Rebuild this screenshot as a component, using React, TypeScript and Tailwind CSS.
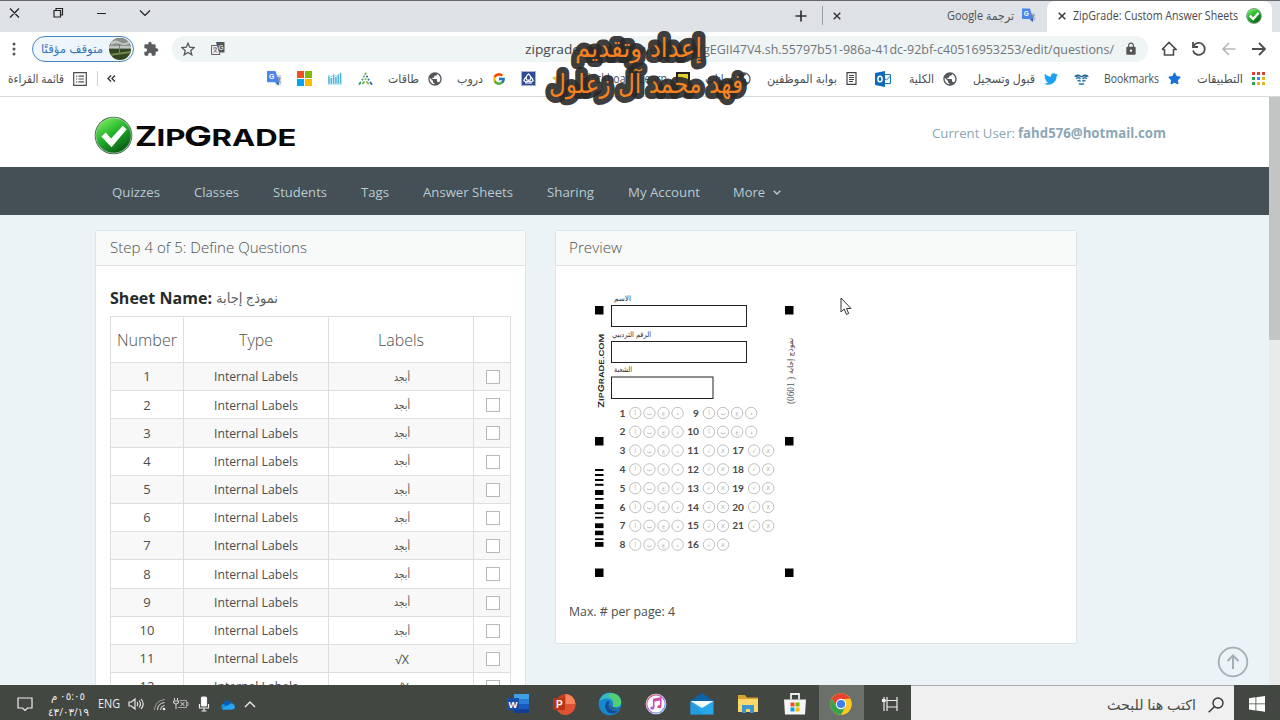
import { useLayoutEffect, useRef, type ReactNode } from 'react';
import { MdExtension, MdLock, MdPublic } from 'react-icons/md';
import { FaTwitter, FaStar } from 'react-icons/fa';
import { FcGoogle } from 'react-icons/fc';

/** One line of text scaled horizontally so that it fills its box exactly. */
function Fit({ className, children }: { className: string; children: ReactNode }) {
  const outer = useRef<HTMLSpanElement>(null);
  const inner = useRef<HTMLSpanElement>(null);
  useLayoutEffect(() => {
    const o = outer.current;
    const i = inner.current;
    if (!o || !i) return;
    i.style.transform = 'none';
    const natural = i.getBoundingClientRect().width;
    i.style.transform = `scaleX(${o.getBoundingClientRect().width / natural})`;
  });
  return (
    <span ref={outer} className={`block shrink-0 whitespace-nowrap ${className}`}>
      <span ref={inner} dir="auto" className="inline-block origin-left">
        {children}
      </span>
    </span>
  );
}

function CheckBall({ className, id }: { className: string; id: string }) {
  return (
    <svg viewBox="0 0 40 40" className={className}>
      <defs>
        <linearGradient id={id} x1="0.2" y1="0" x2="0.8" y2="1">
          <stop offset="0" stopColor="#7bea5c" />
          <stop offset="0.45" stopColor="#1fb22a" />
          <stop offset="1" stopColor="#07500f" />
        </linearGradient>
      </defs>
      <circle cx="20" cy="20" r="19.3" fill="#3f6b48" />
      <circle cx="20" cy="20" r="18.4" fill="#c4dcc4" />
      <circle cx="20" cy="20" r="17.8" fill={`url(#${id})`} />
      <path d="M7.5 21 12 17l5.5 6L29.5 10l4 3.5L18 32z" fill="#fff" />
    </svg>
  );
}

function Translate({ className }: { className: string }) {
  return (
    <svg viewBox="0 0 16 16" className={className}>
      <path d="M6 4h9.2v11.5H9z" fill="#d5dbe0" />
      <path d="M0 0h9l4 12H1.2Q0 12 0 11z" fill="#4a86e8" />
      <path d="m9 12 3 3.5L13 12z" fill="#2858b8" />
      <text x="2" y="8.8" fontSize="7.5" fontWeight="700" fontFamily="Liberation Sans" fill="#fff">G</text>
      <path d="M10.5 7.5h4M12.5 6.5v1M14 7.5q-.5 3-3 4.5M11.5 8.5l3 4" stroke="#6b7d91" strokeWidth=".9" fill="none" />
    </svg>
  );
}

function Ms({ className }: { className: string }) {
  return (
    <svg viewBox="0 0 15 15" className={className}>
      <path d="M0 0h7v7H0z" fill="#f25022" />
      <path d="M8 0h7v7H8z" fill="#7fba00" />
      <path d="M0 8h7v7H0z" fill="#00a4ef" />
      <path d="M8 8h7v7H8z" fill="#ffb900" />
    </svg>
  );
}

function TabStrip() {
  return (
    <div className="flex h-[32px] shrink-0 items-start border-t border-[#67676d] bg-[#dee1e5]">
      <svg viewBox="0 0 160 26" className="h-[26px] w-[160px]" fill="none" stroke="#222" strokeWidth="1.2">
        <path d="m10 7.500 9 9m0-9-9 9M97 12.500h9m34-3 5 5 5-5" />
        <path d="M54 9.500h6.500V16H54zm2-.5V7.500h6.500V14H61" />
      </svg>
      <div className="ml-[635px] flex h-[29px] items-center">
        <svg viewBox="0 0 12 12" className="size-[12px]" stroke="#333" strokeWidth="1.700"><path d="M6 .5v11M.5 6h11" /></svg>
        <div className="ml-[15px] h-[19px] w-px bg-[#9a9ea3]" />
        <svg viewBox="0 0 8 8" className="ml-[10px] size-[8px]" stroke="#333" strokeWidth="1.400"><path d="m.7.7 6.600 6.600m0-6.600L.7 7.300" /></svg>
        <Fit className="ml-[106px] w-[67px] text-[12px] leading-[18px] text-[#505357]">ترجمة Google</Fit>
        <Translate className="ml-[8px] h-[15px] w-[14px]" />
      </div>
      <div className="ml-[11px] flex h-[31px] w-[225px] items-center rounded-t-lg bg-white pb-[2px]">
        <svg viewBox="0 0 8 8" className="ml-[11px] size-[8px]" stroke="#333" strokeWidth="1.400"><path d="m.7.7 6.600 6.600m0-6.600L.7 7.300" /></svg>
        <Fit className="ml-[7px] w-[165px] text-[12px] leading-[18px] text-[#45494d]">ZipGrade: Custom Answer Sheets</Fit>
        <CheckBall id="tabBall" className="ml-[8px] size-[16px]" />
      </div>
    </div>
  );
}

function Toolbar() {
  return (
    <div className="flex h-[33px] shrink-0 items-center bg-white">
      <svg viewBox="0 0 4 14" className="ml-[12px] h-[14px] w-[4px]" fill="#555">
        <circle cx="2" cy="2" r="1.500" /><circle cx="2" cy="7" r="1.500" /><circle cx="2" cy="12" r="1.500" />
      </svg>
      <div className="ml-[16px] flex h-[26px] w-[102px] items-center rounded-full border border-[#4d86b8] bg-[#eef6fc]">
        <Fit className="ml-[8px] w-[62px] text-[12px] leading-[18px] text-[#3a78b5]">متوقف مؤقتًا</Fit>
        <svg viewBox="0 0 22 22" className="ml-[6px] size-[22px] rounded-full">
          <path d="M0 0h22v22H0z" fill="#33461f" />
          <path d="M0 0h22v11H0z" fill="#8b918d" />
          <path d="M2 4q5-3 9 0t9-1v3q-5 2-9 0t-9 1zM0 8h22v2H0z" fill="#c3c7c2" />
          <path d="M10 6h1v10h-1zM0 16l22-3v2L0 18z" fill="#738851" />
        </svg>
      </div>
      <MdExtension className="ml-[9px] size-[16px] text-[#5a5d60]" />
      <div className="ml-[13px] flex h-[26px] w-[976px] items-center rounded-full bg-[#eff4f4]">
        <svg viewBox="0 0 24 24" className="ml-[9px] size-[14px]" fill="none" stroke="#555" strokeWidth="2.200">
          <path d="m12 2 3 7 7.500.7-5.700 5 1.700 7.300L12 18l-6.500 4 1.700-7.300-5.700-5L9 9z" />
        </svg>
        <svg viewBox="0 0 14 14" className="ml-[16px] size-[14px]">
          <path d="M5 0h8.500v10.500H7.500z" fill="#53575a" />
          <path d="M.5 3.500h6l2.500 9H.5z" fill="#eee" stroke="#666" />
          <path d="M2 6h4M4 5v1m1.500 0q0 3-3 4.500M3 7.500l3 3" stroke="#666" strokeWidth=".8" fill="none" />
          <text x="7.500" y="7.500" fontSize="6.500" fontWeight="700" fontFamily="Liberation Sans" fill="#ddd">G</text>
        </svg>
        <div className="ml-[300px] flex items-center text-[13.5px] leading-[20px]">
          <Fit className="w-[178px] text-[#45494c]">zipgrade.com/answersheet/</Fit>
          <Fit className="w-[411px] text-[#6f7679]">gEGII47V4.sh.55797b51-986a-41dc-92bf-c40516953253/edit/questions/</Fit>
        </div>
        <MdLock className="ml-[10px] size-[14px] text-[#555]" />
      </div>
      <svg viewBox="0 0 16 16" className="ml-[13px] size-[16px]" fill="none" stroke="#4b4e51" strokeWidth="1.600">
        <path d="M3.500 8v6h9V8M1 8.500 8 1.500l7 7h-2.500M1 8.500h2.500" />
      </svg>
      <svg viewBox="0 0 16 16" className="ml-[14px] size-[16px]" fill="none" stroke="#4b4e51" strokeWidth="1.800">
        <path d="M2.500 5A6 6 0 1 1 2 9.500" /><path d="M2 1v5h5" />
      </svg>
      <svg viewBox="0 0 14 14" className="ml-[15px] size-[14px]" fill="none" stroke="#b5b8ba" strokeWidth="1.600">
        <path d="M13.500 7h-12M7 1 1 7l6 6" />
      </svg>
      <svg viewBox="0 0 14 14" className="ml-[16px] size-[14px]" fill="none" stroke="#4b4e51" strokeWidth="1.800">
        <path d="M0 7h12.500M7 1l6 6-6 6" />
      </svg>
    </div>
  );
}

const globe = 'size-[16px] shrink-0 text-[#55585b]';

function Bookmarks() {
  return (
    <div className="flex h-[32px] shrink-0 items-center border-b border-[#d7dada] bg-white pb-[4px] text-[12px] leading-[18px] text-[#4c5053]">
      <Fit className="ml-[8px] w-[56px]">قائمة القراءة</Fit>
      <svg viewBox="0 0 14 14" className="ml-[9px] size-[14px]" fill="none" stroke="#4b4e51" strokeWidth="1.200">
        <path d="M.7.7h12.600v12.600H.7zM3 4.200h1.200m1.300 0H11M3 7h1.200m1.300 0H11M3 9.800h1.200m1.300 0H11" />
      </svg>
      <div className="ml-[10px] h-[15px] w-px bg-[#d0d3d5]" />
      <svg viewBox="0 0 10 8" className="ml-[9px] h-[7px] w-[9px]" fill="none" stroke="#333" strokeWidth="1.500"><path d="M4.500.5 1 4l3.500 3.500M9 .5 5.500 4 9 7.500" /></svg>
      <Translate className="ml-[151px] size-[15px]" />
      <Ms className="ml-[15px] size-[15px]" />
      <svg viewBox="0 0 15 13" className="ml-[16px] h-[13px] w-[14px]">
        <path d="M1 12V4m2.500 8V6m2.500 6V3m2.500 9V5m2.500 7V2.500M13.500 12V1" stroke="#4db4d8" strokeWidth="1.700" />
        <path d="m0 3 3 2 3-3 3 2 5-4M0 12.500h15" stroke="#93d3e8" fill="none" />
      </svg>
      <svg viewBox="0 0 15 14" className="ml-[16px] h-[14px] w-[15px]" strokeLinecap="round" strokeWidth="2" fill="none">
        <path d="M7.500 1.500v.5M6 4.500l-.1.100" stroke="#63b246" />
        <path d="m9 4.500.1.100M10.500 7.500l.1.100M12.500 10.500l1 1.500" stroke="#2a6eb5" />
        <path d="m4.500 7.500-.1.100M2.500 10.500l-1 1.500" stroke="#2d9c8d" />
        <path d="m7.500 7-.1.100M6 10l-1 1.500M9 10l1 1.500" stroke="#7ebc3b" />
      </svg>
      <Fit className="ml-[15px] w-[31px]">طاقات</Fit>
      <MdPublic className={`ml-[8px] ${globe}`} />
      <Fit className="ml-[14px] w-[26px]">دروب</Fit>
      <FcGoogle className="ml-[9px] size-[14px] shrink-0" />
      <svg viewBox="0 0 15 15" className="ml-[15px] size-[15px]">
        <path d="M0 0h15v15H0z" fill="#a8b4d5" /><path d="M1 1h13v13H1z" fill="#304b91" />
        <path d="M7.500 3q3 2 2 6h-4q-1-4 2-6zM2.500 9q1.500 3 5 1 3.500 2 5-1M4 12h7M5 6q-2 2-2 4m7-4q2 2 2 4" stroke="#fff" strokeWidth="1.100" fill="none" />
      </svg>
      <FaStar className="ml-[16px] size-[14px] shrink-0 text-[#e1c633]" />
      <Fit className="ml-[15px] w-[86px]">Blackboard Learn</Fit>
      <div className="ml-[9px] size-[14px] shrink-0 border-2 border-[#222] bg-[#e5ce28]" />
      <Fit className="ml-[15px] w-[25px]">بيانات</Fit>
      <MdPublic className={`ml-[6px] ${globe}`} />
      <Fit className="ml-[15px] w-[70px]">بوابة الموظفين</Fit>
      <svg viewBox="0 0 11 13" className="ml-[9px] h-[13px] w-[11px]" fill="none" stroke="#444" strokeWidth="1.200"><path d="M1 .7h9v11.600H1zM3 3.500h5M3 5.500h5M3 7.500h5M3 9.500h4" /></svg>
      <svg viewBox="0 0 16 16" className="ml-[18px] size-[16px]">
        <path d="M8 3.500h7.500v9H8z" fill="#fff" stroke="#1473bf" /><path d="m8 6 3.500 3L15.500 5" stroke="#1473bf" fill="none" />
        <path d="m0 2 10-2v16L0 14z" fill="#0f6bb8" /><ellipse cx="5" cy="8" rx="2.100" ry="2.800" fill="none" stroke="#fff" strokeWidth="1.500" />
      </svg>
      <Fit className="ml-[18px] w-[25px]">الكلية</Fit>
      <MdPublic className={`ml-[8px] ${globe}`} />
      <Fit className="ml-[15px] w-[62px]">قبول وتسجيل</Fit>
      <FaTwitter className="ml-[9px] size-[14px] shrink-0 text-[#1da1f2]" />
      <svg viewBox="0 0 15 12" className="ml-[16px] h-[12px] w-[15px]" fill="none">
        <path d="M0 3.500Q3 0 7.500 3 12 0 15 3.500l-2.500.500Q9.500 3 7.500 4.500 5.500 3 2.500 4z" fill="#245f8f" />
        <path d="M2 5.500q3-1.500 4.500.5M13 5.500q-3-1.500-4.500.5M3.500 8q2-1 3 .5m5-.5q-2-1-3 .5M5 10.500q2.500 1.500 5 0" stroke="#2d7eb0" strokeWidth="1.500" />
      </svg>
      <Fit className="ml-[15px] w-[55px]">Bookmarks</Fit>
      <FaStar className="ml-[9px] size-[13px] shrink-0 text-[#1a73d8]" />
      <Fit className="ml-[16px] w-[46px]">التطبيقات</Fit>
      <div className="ml-[9px] grid grid-cols-3 gap-[2px]">
        {['bg-[#d94435]', 'bg-[#d94435]', 'bg-[#d94435]', 'bg-[#2d9d50]', 'bg-[#4285f4]', 'bg-[#e8b323]', 'bg-[#2d9d50]', 'bg-[#e8b323]', 'bg-[#e8b323]'].map((c, i) => (
          <div key={i} className={`size-[3px] ${c}`} />
        ))}
      </div>
    </div>
  );
}

function Logo() {
  return (
    <div className="ml-[94px] flex items-center">
      <CheckBall id="logoBall" className="size-[39px]" />
      <svg viewBox="133 115 164 40" className="h-[40px] w-[164px]" fontFamily="Inter" fontWeight="700" fill="#080808">
        <text x="135" y="145.500" fontSize="27" textLength="22" lengthAdjust="spacingAndGlyphs">Z</text>
        <text x="156.500" y="145.500" fontSize="22.500" textLength="29" lengthAdjust="spacingAndGlyphs">IP</text>
        <text x="184" y="145.500" fontSize="27" textLength="28" lengthAdjust="spacingAndGlyphs">G</text>
        <text x="211.500" y="145.500" fontSize="22.500" textLength="85" lengthAdjust="spacingAndGlyphs">RADE</text>
      </svg>
    </div>
  );
}

function SiteNav() {
  return (
    <nav className="flex h-[48px] shrink-0 items-center gap-[34px] bg-[#444f56] pt-[2px] pl-[112px] text-[13.5px] leading-[20px] text-[#b9cbd3]">
      <Fit className="w-[48px]">Quizzes</Fit>
      <Fit className="w-[45px]">Classes</Fit>
      <Fit className="w-[54px]">Students</Fit>
      <Fit className="w-[28px]">Tags</Fit>
      <Fit className="w-[90px]">Answer Sheets</Fit>
      <Fit className="w-[47px]">Sharing</Fit>
      <Fit className="w-[72px]">My Account</Fit>
      <div className="-ml-px flex items-center gap-[8px]">
        <Fit className="w-[32px]">More</Fit>
        <svg viewBox="0 0 8 5" className="h-[5px] w-[8px]" fill="none" stroke="#b9cbd3" strokeWidth="1.300"><path d="m.7.7 3.300 3.300L7.300.7" /></svg>
      </div>
    </nav>
  );
}

const grid = 'grid grid-cols-[73px_145px_145px_36px] divide-x divide-[#dddfdf]';

function QuestionsCard() {
  return (
    <section className="h-[520px] w-[431px] shrink-0 rounded-[3px] border border-[#dfe5e7] bg-white">
      <header className="flex h-[35px] items-center border-b border-[#dfe2e3] bg-[#f8f9f9] pb-[2px] pl-[14px] text-[15px] font-light text-[#4d524f]">
        <Fit className="w-[197px]">Step 4 of 5: Define Questions</Fit>
      </header>
      <div className="px-[14px]">
        <div className="flex h-[50px] items-end pb-[6px]">
          <Fit className="w-[102px] text-[15.5px] leading-[24px] font-bold text-[#262a28]">Sheet Name:</Fit>
          <Fit className="ml-[4px] w-[62px] text-[14px] leading-[24px] text-[#5c615e]">نموذج إجابة</Fit>
        </div>
        <div className="w-[401px] border border-[#dddfdf]">
          <div className={`${grid} h-[45px] items-stretch text-[16px] font-light text-[#4d524f]`}>
            <div className="flex items-center justify-center"><Fit className="w-[60px]">Number</Fit></div>
            <div className="flex items-center justify-center"><Fit className="w-[34px]">Type</Fit></div>
            <div className="flex items-center justify-center"><Fit className="w-[46px]">Labels</Fit></div>
            <div />
          </div>
          {Array.from({ length: 14 }, (_, i) => i + 1).map((n) => (
            <div key={n} className={`${grid} h-[28.2px] border-t border-[#dddfdf] text-[13px] text-[#4a4f4c] ${n % 2 ? 'bg-[#f8f8f8]' : 'bg-white'}`}>
              <div className="flex items-center justify-center pt-px">{n}</div>
              <div className="flex items-center justify-center pt-px"><Fit className="w-[84px]">Internal Labels</Fit></div>
              <div className="flex items-center justify-center pt-px pl-px">
                {n <= 10 ? <Fit className="w-[16px] text-[11px]">أبجد</Fit> : <Fit className="w-[14px] pt-[2px] text-[12px]">√X</Fit>}
              </div>
              <div className="flex items-center justify-center pt-px pl-px"><div className="size-[14px] border border-[#b5b9b8] bg-white" /></div>
            </div>
          ))}
        </div>
      </div>
    </section>
  );
}

const BARS: [number, number][] = [
  [469, 2], [474, 2], [479, 2], [483.8, 2], [490, 5], [498, 1.8], [504, 5], [512.3, 1.8],
  [516.8, 1.8], [523.3, 4.8], [530.7, 4.5], [538.3, 1.8], [542, 4.8],
];
const FOUR = ['أ', 'ب', 'ج', 'د'];
const TWO = ['√', 'X'];

function Question({ n, right, first, y, marks }: { n: number; right: number; first: number; y: number; marks: string[] }) {
  return (
    <g>
      <text x={right} y={y + 3.5} textAnchor="end" fontSize="10.2" fontFamily="Lato" fontWeight="700" fill="#484848">{n}</text>
      {marks.map((m, i) => (
        <g key={m}>
          <circle cx={first + i * 14.1} cy={y} r="5.7" fill="none" stroke="#b0b0b0" strokeWidth=".8" />
          <text x={first + i * 14.1} y={y + 2} textAnchor="middle" fontSize="5.5" fontFamily="DejaVu Sans" fill="#aaa">{m}</text>
        </g>
      ))}
    </g>
  );
}

function SheetPreview() {
  const rowY = (r: number) => 413 + r * 18.8;
  return (
    <svg viewBox="580 280 220 310" className="ml-[10px] h-[310px] w-[220px]">
      {[306, 437, 568.5].map((y) => (
        <g key={y}><rect x="595" y={y} width="8.500" height="8.500" /><rect x="785" y={y} width="8.500" height="8.500" /></g>
      ))}
      {BARS.map(([y, h]) => <rect key={y} x="595" y={y} width="8.500" height={h} />)}
      <g fill="none" stroke="#222" strokeWidth="1">
        <rect x="611.500" y="305.500" width="135" height="21" />
        <rect x="611.500" y="341.500" width="135" height="21" />
        <rect x="611.500" y="377" width="101.500" height="21.500" />
      </g>
      <g fontFamily="DejaVu Sans" fontSize="7.500" fill="#333">
        <text x="614" y="301" textLength="17" lengthAdjust="spacingAndGlyphs">الاسم</text>
        <text x="612" y="336.500" textLength="39" lengthAdjust="spacingAndGlyphs">الرقم الترديبي</text>
        <text x="614" y="372" textLength="18" lengthAdjust="spacingAndGlyphs">الشعبة</text>
      </g>
      <text transform="translate(603.500 408) rotate(-90)" fontFamily="Inter" fontWeight="600" fontSize="8" fill="#222" textLength="74" lengthAdjust="spacingAndGlyphs">
        Z<tspan fontSize="6.800">IP</tspan>G<tspan fontSize="6.800">RADE.COM</tspan>
      </text>
      <text transform="translate(793 374) rotate(-90)" fontFamily="DejaVu Sans" fontSize="8" fill="#444" textLength="36" lengthAdjust="spacingAndGlyphs">نموذج إجابة</text>
      <text transform="translate(794 404) rotate(-90)" fontFamily="Liberation Serif" fontSize="10" fill="#555" textLength="27" lengthAdjust="spacingAndGlyphs">(0601 )</text>
      {[1, 2, 3, 4, 5, 6, 7, 8].map((n) => <Question key={n} n={n} right={625.5} first={635.3} y={rowY(n - 1)} marks={FOUR} />)}
      {[9, 10, 11, 12, 13, 14, 15, 16].map((n) => <Question key={n} n={n} right={699} first={708.9} y={rowY(n - 9)} marks={n < 11 ? FOUR : TWO} />)}
      {[17, 18, 19, 20, 21].map((n) => <Question key={n} n={n} right={744} first={754.1} y={rowY(n - 15)} marks={TWO} />)}
    </svg>
  );
}

function PreviewCard() {
  return (
    <section className="h-[414px] w-[522px] shrink-0 rounded-[3px] border border-[#dfe5e7] bg-white">
      <header className="flex h-[35px] items-center border-b border-[#dfe2e3] bg-[#f8f9f9] pb-[2px] pl-[13px] text-[15px] font-light text-[#4d524f]">
        <Fit className="w-[53px]">Preview</Fit>
      </header>
      <div className="px-[14px] pt-[14px]">
        <SheetPreview />
        <div className="-ml-px pt-[11px] text-[13px] leading-[20px] text-[#4a4f4c]">
          <Fit className="w-[106px]">Max. # per page: 4</Fit>
        </div>
      </div>
    </section>
  );
}

function WindowsTaskbar() {
  const icon = 'h-[24px] w-[24px] shrink-0';
  return (
    <div className="flex h-[35px] shrink-0 items-stretch bg-[#434742] text-[#eee]">
      <div className="flex w-[505.5px] items-center pt-[3px]">
        <svg viewBox="0 0 16 16" className="ml-[17px] size-[16px]" fill="none" stroke="#eee" strokeWidth="1.200"><path d="M1 2h14v10h-4.500L8 14.500 5.500 12H1z" /></svg>
        <div className="ml-[14px] flex w-[42px] flex-col items-center text-[11px] leading-[16px]">
          <Fit className="w-[34px]">٠٥:٠٥ م</Fit>
          <Fit className="w-[41px]">٤٣/٠٣/١٩</Fit>
        </div>
        <Fit className="ml-[9px] w-[22px] text-[12px]">ENG</Fit>
        <svg viewBox="0 0 16 14" className="ml-[8px] h-[14px] w-[16px]" fill="none" stroke="#eee" strokeWidth="1.100"><path d="M1 5h2.500L7 2v10L3.500 9H1zM9 5q1.500 2 0 4M11 3.500q3 3.500 0 7M13 2q4.500 5 0 10" /></svg>
        <svg viewBox="0 0 14 14" className="ml-[9px] size-[14px]" fill="none"><circle cx="11" cy="12" r="1.300" fill="#eee" /><path d="M7.500 13q0-4 4-4.500M4.500 13q0-6.500 7-7.500" stroke="#ddd" /><path d="M1.500 13Q2 3.500 12 2.500" stroke="#9a9d98" /></svg>
        <svg viewBox="0 0 16 12" className="ml-[6px] h-[12px] w-[16px]" fill="none" stroke="#ddd"><path d="M1.500 0v2.500m3-2.500v2.500M.5 3h5v2q-2.500 2-5 0zM3 6v5" /><path d="M6.500 2.500h7v7H5M13.500 4.500H15v3h-1.500" stroke="#aaa" /><path d="m7.500 4 4 4m0-4-4 4" /></svg>
        <svg viewBox="0 0 12 16" className="ml-[9px] h-[16px] w-[12px]" fill="none" stroke="#eee" strokeWidth="1.200"><rect x="3.500" y="1" width="5" height="9" rx="1" fill="#fff" /><path d="M1.500 8v4h9V8M6 12v3M3.500 15h5" /></svg>
        <svg viewBox="0 0 16 11" className="ml-[9px] h-[11px] w-[16px]"><path d="M4 10.500a3.500 3.500 0 0 1 0-6A5 5 0 0 1 12.500 4q3 .5 3.300 3.500 0 3-3.300 3z" fill="#1490df" /><path d="M3.500 4.500A5 5 0 0 1 12.500 4L8 7z" fill="#0a5ba8" /><path d="m3 10 9-5.500q3.500.5 3.800 3.500-.3 2.500-3.300 2.500H4z" fill="#2aa5ef" /></svg>
        <svg viewBox="0 0 12 7" className="ml-[9px] h-[7px] w-[12px]" fill="none" stroke="#eee" strokeWidth="1.400"><path d="m1 6 5-5 5 5" /></svg>
      </div>
      <div className="flex flex-1 items-center gap-[22.200px] pt-[3px]">
        <svg viewBox="0 0 24 24" className={icon}><path d="M8 2h15v5H8z" fill="#3fa0e8" /><path d="M8 7h15v5H8z" fill="#2b7cd3" /><path d="M8 12h15v5H8z" fill="#185abd" /><path d="M8 17h15v4H8z" fill="#103f91" /><path d="M1 6h12v12H1z" fill="#174ea6" /><text x="2.500" y="15.500" fontFamily="Liberation Sans" fontWeight="700" fontSize="9.500" fill="#fff">W</text></svg>
        <svg viewBox="0 0 24 24" className={icon}><circle cx="13.500" cy="12" r="10" fill="#c9401f" /><path d="M13.500 2a10 10 0 0 1 10 10h-10z" fill="#f6855f" /><path d="M23.500 12a10 10 0 0 1-20 2L13.500 12z" fill="#df5131" /><path d="M1 6h12v12H1z" fill="#b83417" /><text x="4" y="15.500" fontFamily="Liberation Sans" fontWeight="700" fontSize="10" fill="#fff">P</text></svg>
        <svg viewBox="0 0 24 24" className={icon}>
          <circle cx="12" cy="12" r="11.300" fill="#1688cf" />
          <path d="M1 9Q4 .5 12.500.7 23 1.500 23.300 10.500q-1 4.500-6 4.500-3.500-.3-2-3Q14 6 8 6.500 3.500 7 1 9z" fill="#35b8c8" />
          <path d="M14 1q8 1.500 9.300 9.500-1 4.500-6 4.500-3.500-.3-2-3 1-6-5.500-8z" fill="#54cf70" />
          <path d="M9 9q-4 6 .5 11 6 4 11.500-2-5 2-9-1.500-3-4 0-7.500z" fill="#164c94" />
          <path d="M12.500 10.500q-1.500 4.500 4 6 4 .5 6-1l.5 1q-5 1.500-8.500.5-4-2-2-6.500z" fill="#434742" />
        </svg>
        <svg viewBox="0 0 24 24" className={icon}>
          <defs><linearGradient id="noteRing" x1="0" y1="0" x2="1" y2="1"><stop offset="0" stopColor="#f4516c" /><stop offset=".5" stopColor="#b96be0" /><stop offset="1" stopColor="#43b5ee" /></linearGradient></defs>
          <circle cx="12" cy="12" r="10.300" fill="#fff" /><circle cx="12" cy="12" r="9.200" fill="none" stroke="url(#noteRing)" strokeWidth="1.200" />
          <path d="M9.700 15.500V7.500l7-1.500v8M9.700 9l7-1.500" stroke="#cf4da8" strokeWidth="1.600" fill="none" /><ellipse cx="8.300" cy="16" rx="2" ry="1.600" fill="#a35ae0" /><ellipse cx="15.300" cy="14.700" rx="2" ry="1.600" fill="#e2467d" />
        </svg>
        <svg viewBox="0 0 24 24" className={icon}><path d="M.5 9 12 1l11.500 8z" fill="#0c63a8" /><path d="M.5 9h23v13.500H.5z" fill="#28a8ea" /><path d="M.5 9h23L12 16z" fill="#f3f8fb" /><path d="M.5 9 14 22.500H.5z" fill="#1e8fd5" opacity=".55" /></svg>
        <svg viewBox="0 0 24 24" className={icon}><path d="M2 3h7l2 2.500h11V9H2z" fill="#d9a22b" /><path d="M2 7h20v13H2z" fill="#fbd86b" /><path d="M6 13h12v8h-4v-4h-4v4H6z" fill="#3d97cf" /></svg>
        <svg viewBox="0 0 24 24" className={icon}><path d="M8 7.500V2h8v5.500" stroke="#eee" strokeWidth="1.800" fill="none" /><path d="M1 7.500h22l-1 15H2z" fill="#f5f5f5" /><path d="M7.500 10.500h4v4h-4z" fill="#f25022" /><path d="M12.500 10.500h4v4h-4z" fill="#7fba00" /><path d="M7.500 15.500h4v4h-4z" fill="#00a4ef" /><path d="M12.500 15.500h4v4h-4z" fill="#ffb900" /></svg>
        <div className="-mx-[10px] -mt-[3px] flex h-[35px] w-[45px] shrink-0 items-center justify-center bg-[#6c706b] pt-[3px]">
          <svg viewBox="0 0 24 24" className="size-[24px]">
            <circle cx="12" cy="12" r="10.800" fill="#fbc926" />
            <path d="M2.650 6.600a10.800 10.800 0 0 1 18.700 0L12 7.200 7.500 14z" fill="#e5432f" />
            <path d="M2.650 6.600A10.800 10.800 0 0 0 12 22.800L16.500 14.500 7.500 14.500z" fill="#34a34f" />
            <circle cx="12" cy="12" r="5.200" fill="#fff" /><circle cx="12" cy="12" r="4.100" fill="#3f80e8" />
          </svg>
        </div>
        <svg viewBox="0 0 18 16" className="ml-[5px] h-[16px] w-[18px] shrink-0" fill="none" stroke="#eee" strokeWidth="1.200"><path d="M3 1v14M1 4.500h4M6 4.500h10v6.500H6zM6 1v14M16 1v14" /><path d="M1 3h3.500v3H1z" fill="#eee" stroke="none" /></svg>
      </div>
      <div className="flex w-[323px] items-center border-t border-[#a9adad] bg-[#f0f0f0] pt-[3px]">
        <Fit className="ml-[196px] w-[89px] text-[14px] leading-[20px] text-[#4a4d4a]">اكتب هنا للبحث</Fit>
        <svg viewBox="0 0 16 16" className="ml-[12px] size-[16px]" fill="none" stroke="#333" strokeWidth="1.400"><circle cx="10" cy="6" r="5" /><path d="M6.300 9.700.7 15.300" /></svg>
      </div>
      <div className="flex w-[46px] items-center justify-center pt-[3px]">
        <svg viewBox="0 0 16 16" className="size-[16px]" fill="#fff"><path d="m0 2.200 6.500-.9v6.200H0zM7.300 1.200 16 0v7.500H7.300zM0 8.300h6.500v6.200L0 13.600zM7.300 8.300H16v7.500l-8.700-1.200z" /></svg>
      </div>
    </div>
  );
}

export default function App() {
  return (
    <div className="relative flex h-[720px] w-[1280px] flex-col overflow-hidden bg-white font-['Open_Sans','DejaVu_Sans',sans-serif]">
      <TabStrip />
      <Toolbar />
      <Bookmarks />
      <div className="flex h-[588px] shrink-0">
        <div className="flex w-[1269px] flex-col overflow-hidden bg-[#ebf3f6]">
          <div className="flex h-[70px] shrink-0 items-center bg-white pt-[6px]">
            <Logo />
            <div className="-mt-[5px] ml-[635px] flex gap-[3px] text-[13.5px] leading-[20px] text-[#8ba7b5]">
              <Fit className="w-[83px]">Current User:</Fit>
              <Fit className="w-[148px] font-bold">fahd576@hotmail.com</Fit>
            </div>
          </div>
          <SiteNav />
          <div className="flex items-start gap-[29px] pt-[15px] pl-[95px]">
            <QuestionsCard />
            <PreviewCard />
          </div>
        </div>
        <div className="w-[11px] bg-[#e9eaea]"><div className="h-[243px] bg-[#c3c5c5]" /></div>
      </div>
      <WindowsTaskbar />

      <svg viewBox="0 0 32 32" className="absolute top-[646px] left-[1217px] size-[32px]" fill="none" stroke="#a1b0b6" strokeWidth="1.800">
        <circle cx="16" cy="16" r="14.300" /><path d="M16 23V10M10.500 15 16 9.500l5.500 5.500" strokeWidth="2" />
      </svg>
      <svg viewBox="0 0 12 19" className="absolute top-[297px] left-[840px] h-[19px] w-[12px]" fill="#fff" stroke="#333"><path d="M1 1v14l3.200-3 2.300 5.500 2.200-1L6.500 11.500H11z" /></svg>
      <svg viewBox="530 25 230 85" className="absolute top-[25px] left-[530px] h-[85px] w-[230px]" fontFamily="DejaVu Sans" fontSize="26" fill="#f5821f" stroke="#2b2b2b" strokeWidth="12" strokeOpacity=".93" strokeLinejoin="round" paintOrder="stroke">
        <text x="575" y="57" textLength="127" lengthAdjust="spacingAndGlyphs">إعداد وتقديم</text>
        <text x="549" y="93" textLength="194" lengthAdjust="spacingAndGlyphs">فهد محمد آل زعلول</text>
      </svg>
    </div>
  );
}
